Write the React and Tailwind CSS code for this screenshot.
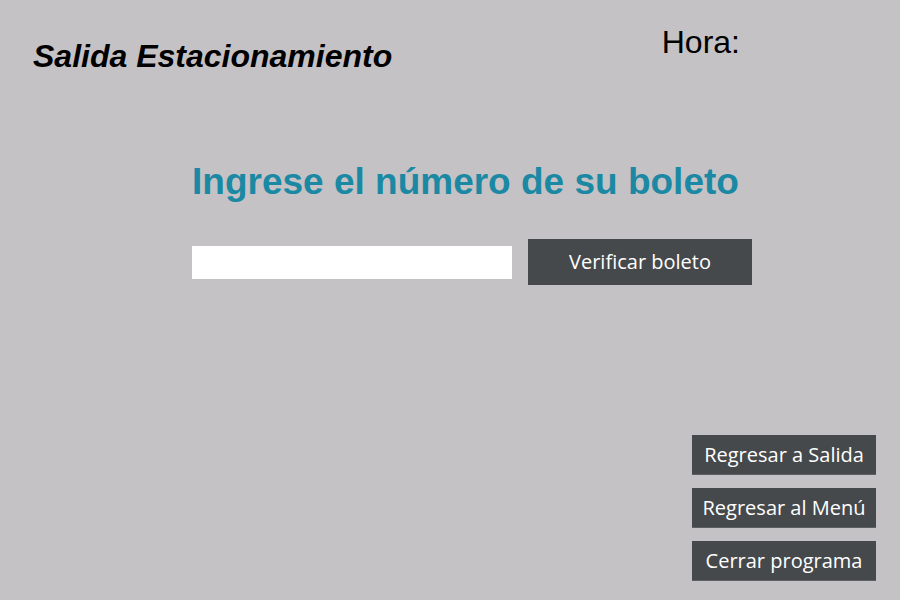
import React from "react";

export default function App() {
  return (
    <div className="w-[900px] h-[600px] bg-[#c4c2c5] flex flex-col overflow-hidden" style={{ fontFamily: '"Liberation Sans", Arial, sans-serif' }}>
      <div className="flex items-start">
        <h1 className="ml-[33px] mt-[40px] text-[32px] leading-none font-bold italic text-black">Salida Estacionamiento</h1>
        <div className="ml-auto mr-[160px] mt-[26px] text-[32px] leading-none text-black">Hora:</div>
      </div>
      <h2 className="ml-[192px] mt-[91px] text-[37px] leading-none font-bold text-[#1b89a3]">Ingrese el número de su boleto</h2>
      <div className="ml-[192px] mt-[39px] flex items-center gap-[16px]">
        <input className="w-[320px] h-[33px] bg-white border-0 outline-none" />
        <button className="w-[224px] h-[46px] bg-[#46494c] text-white text-[20px]" style={{ fontFamily: '"Open Sans", sans-serif' }}>Verificar boleto</button>
      </div>
      <div className="mt-auto mb-[19px] mr-[24px] self-end flex flex-col gap-[13px]">
        {["Regresar a Salida", "Regresar al Menú", "Cerrar programa"].map((t) => (
          <button key={t} className="w-[184px] h-[40px] bg-[#46494c] text-white text-[20px] border-b border-[#5d6063]" style={{ fontFamily: '"Open Sans", sans-serif' }}>{t}</button>
        ))}
      </div>
    </div>
  );
}
